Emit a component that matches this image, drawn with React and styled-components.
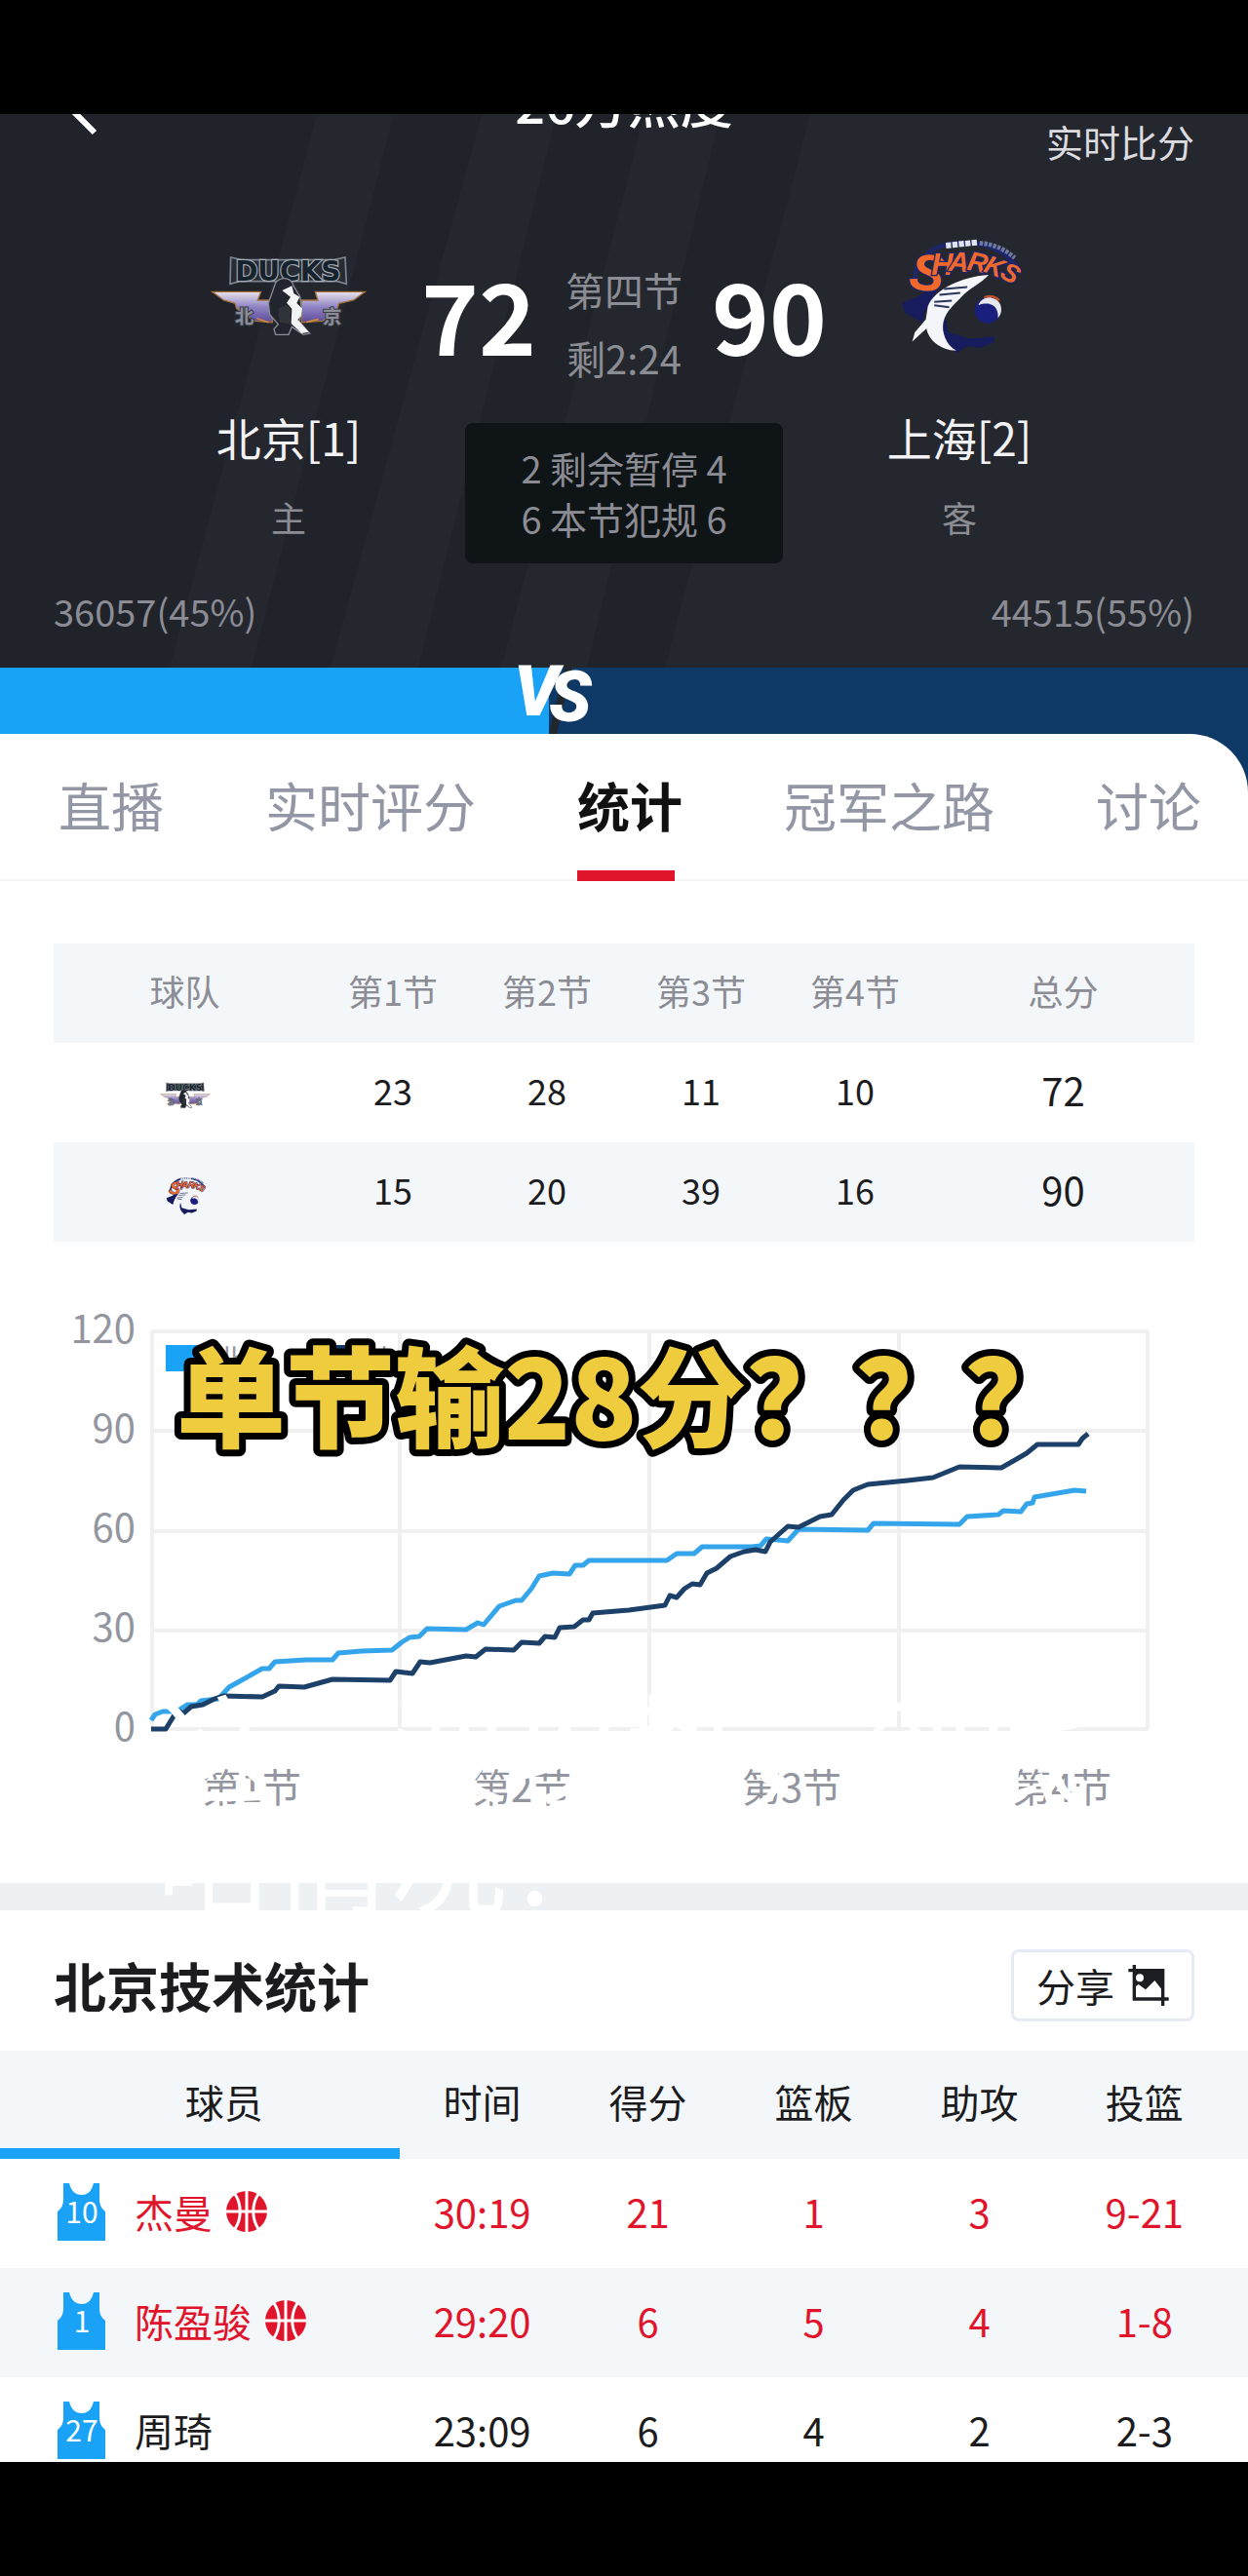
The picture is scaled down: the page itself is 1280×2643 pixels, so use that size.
import React from "react";
import styled, { createGlobalStyle } from "styled-components";

const colors = {
    night: "#20232a",
    nightSoft: "#24272e",
    box: "#0f1417",
    home: "#1aa2f7",
    away: "#0e3865",
    red: "#e0142a",
    ink: "#1c1c1e",
    muted: "#8b8c94",
    tab: "#9296a5",
    stripe: "#f3f7fa",
    band: "#edf1f4",
};

const tabs = ["直播", "实时评分", "统计", "冠军之路", "讨论"];

const periods = ["第1节", "第2节", "第3节", "第4节"];

const players = [
    {
        number: 10,
        name: "杰曼",
        onCourt: true,
        stats: ["30:19", "21", "1", "3", "9-21"],
    },
    {
        number: 1,
        name: "陈盈骏",
        onCourt: true,
        stats: ["29:20", "6", "5", "4", "1-8"],
    },
    {
        number: 27,
        name: "周琦",
        onCourt: false,
        stats: ["23:09", "6", "4", "2", "2-3"],
    },
];

const homeLine =
    "155,465 159,459 167,456 181,456 192,449 202,449 206,445 224,443 235,431 269,412 276,412 282,405 314,403 341,403 347,396 371,394 402,393 412,385 420,380 430,379 438,371 478,372 490,365 496,367 512,348 529,342 535,342 545,330 553,317 567,314 584,315 590,306 598,306 604,301 684,301 694,294 712,294 720,287 771,287 780,286 786,279 798,280 808,281 819,269 890,270 896,263 984,264 992,256 1024,254 1029,250 1047,251 1053,243 1059,242 1061,236 1102,229 1114,230";

const awayLine =
    "155,474 170,474 178,461 184,456 188,458 196,451 208,449 220,443 229,440 269,441 282,435 286,430 312,431 341,423 400,424 406,415 423,417 431,405 441,406 478,399 488,400 498,392 527,393 535,385 553,386 559,379 569,380 574,370 589,369 598,362 604,362 608,355 645,352 682,347 687,337 694,339 702,330 710,325 718,326 725,314 735,309 749,297 763,292 775,290 785,292 790,282 808,266 819,267 841,256 853,254 865,239 875,229 890,223 931,219 957,216 984,205 1027,206 1041,198 1053,191 1064,182 1106,182 1110,176 1116,171";

const GlobalStyle = createGlobalStyle`
    body {
        margin: 0;
        background: #000;
        font-family: "Noto Sans CJK SC", "Noto Sans", sans-serif;
    }

    button {
        font-family: inherit;
        padding: 0;
        border: 0;
        background: none;
        cursor: pointer;
    }
`;

const Frame = styled.div`
    box-sizing: border-box;
    height: 100vh;
    padding: 117px 0;
    background: #000;
`;

const Screen = styled.div`
    height: 100%;
    overflow: hidden;
    background: ${colors.away};
`;

const Header = styled.header`
    position: relative;
    overflow: hidden;
    background: ${colors.nightSoft};
    color: ${colors.muted};
`;

const Stripes = styled.svg`
    position: absolute;
    inset: 0;
    width: 100%;
    height: 100%;
`;

const HeaderContent = styled.div`
    position: relative;
`;

/* the bar is partly scrolled out of the screen */
const NavBar = styled.div`
    display: grid;
    grid-template-columns: 1fr auto 1fr;
    align-items: center;
    height: 122px;
    margin-top: -74px;
    padding: 0 55px;
`;

const BackButton = styled.button`
    justify-self: start;
    color: #fff;

    & svg {
        display: block;
        width: 48px;
        height: 72px;
    }
`;

const NavTitle = styled.h1`
    margin: 0;
    font-size: 54px;
    line-height: 56px;
    font-weight: 500;
    color: #fff;
`;

const LiveLink = styled.a`
    justify-self: end;
    align-self: end;
    font-size: 38px;
    line-height: 40px;
    color: #dcdce0;
    text-decoration: none;
`;

const Scoreboard = styled.div`
    display: grid;
    grid-template-columns: 1fr 426px 1fr;
    padding: 73px 165px 0;
`;

const Team = styled.div`
    display: flex;
    flex-direction: column;
    align-items: center;
`;

const LogoBox = styled.div`
    display: flex;
    align-items: center;
    height: 130px;
`;

const TeamName = styled.div`
    margin-top: 52px;
    font-size: 46px;
    line-height: 56px;
    color: #f2f2f4;
`;

const TeamRole = styled.div`
    margin-top: 30px;
    font-size: 36px;
    line-height: 48px;
`;

const Middle = styled.div`
    display: flex;
    flex-direction: column;
    align-items: center;
    padding-top: 24px;
`;

const ScoreRow = styled.div`
    display: flex;
    gap: 30px;
`;

const Score = styled.div`
    font-size: 100px;
    line-height: 120px;
    font-weight: 700;
    color: #fff;
`;

const Clock = styled.div`
    font-size: 40px;
    line-height: 70px;
    text-align: center;
`;

const FoulBox = styled.div`
    width: 326px;
    margin-top: 32px;
    padding: 20px 0;
    border-radius: 8px;
    background: ${colors.box};
    font-size: 38px;
    line-height: 52px;
    text-align: center;
`;

const Votes = styled.div`
    display: flex;
    justify-content: space-between;
    padding: 25px 55px 34px;
    font-size: 38px;
    line-height: 48px;
`;

const VoteBar = styled.div`
    display: flex;
    position: relative;
    height: 68px;
    background: ${colors.away};
`;

const HomeShare = styled.div`
    background: ${colors.home};
`;

const VersusLogo = styled.svg`
    position: absolute;
    left: 44%;
    top: -16px;
    width: 96px;
    height: 84px;
    margin-left: -36px;
`;

const Panel = styled.main`
    border-radius: 0 60px 0 0;
    background: #fff;
    color: ${colors.ink};
`;

const TabBar = styled.nav`
    display: flex;
    justify-content: space-between;
    height: 149px;
    padding: 0 48px 0 60px;
    border-bottom: 2px solid #f3f4f5;
`;

const Tab = styled.button`
    position: relative;
    padding-bottom: 4px;
    font-size: 54px;
    line-height: 60px;
    font-weight: ${(props) => (props.$active ? 700 : 400)};
    color: ${(props) => (props.$active ? "#111" : colors.tab)};

    &::after {
        content: "";
        display: ${(props) => (props.$active ? "block" : "none")};
        position: absolute;
        left: 0;
        bottom: -2px;
        width: 100px;
        height: 11px;
        background: ${colors.red};
    }
`;

const PeriodSection = styled.section`
    padding: 64px 55px 0;
`;

const PeriodTable = styled.table`
    width: 100%;
    table-layout: fixed;
    border-collapse: collapse;
    font-size: 36px;
    text-align: center;

    & tr {
        height: 102px;
    }

    & thead tr,
    & tbody tr:nth-child(even) {
        background: ${colors.stripe};
    }

    & th {
        font-weight: 400;
        color: ${colors.muted};
    }

    & th,
    & td {
        padding: 0 0 6px;
    }

    & td:last-child {
        font-size: 40px;
    }

    & svg {
        vertical-align: middle;
    }
`;

const ChartSection = styled.section`
    position: relative;
    margin-top: 26px;
    padding-bottom: 72px;
`;

const Chart = styled.svg`
    display: block;
    width: 100%;
    height: auto;
    font-size: 40px;
    fill: #94969f;
`;

const Headline = styled.text`
    font-size: 112px;
    font-weight: 900;
    fill: #efcb3e;
    stroke: #000;
    stroke-width: 14px;
    stroke-linejoin: round;
    paint-order: stroke fill;
`;

const Caption = styled.div`
    position: absolute;
    z-index: 1;
    left: 160px;
    top: 432px;
    font-size: 120px;
    line-height: 114px;
    white-space: nowrap;
    color: #fff;
`;

const Band = styled.div`
    height: 28px;
    background: ${colors.band};
`;

const SectionHead = styled.div`
    display: flex;
    align-items: center;
    justify-content: space-between;
    height: 134px;
    padding: 10px 55px 0;
`;

const SectionTitle = styled.h2`
    margin: 0;
    font-size: 54px;
    line-height: 60px;
    font-weight: 700;
`;

const ShareButton = styled.button`
    display: flex;
    align-items: center;
    justify-content: center;
    gap: 14px;
    box-sizing: border-box;
    width: 188px;
    height: 74px;
    border: 3px solid #e6eaf5;
    border-radius: 8px;
    font-size: 40px;
    color: ${colors.ink};
`;

const StatsTable = styled.table`
    width: 100%;
    table-layout: fixed;
    border-collapse: collapse;
    font-size: 40px;
    line-height: 48px;
    text-align: center;

    & th {
        padding: 0 0 8px;
        font-weight: 400;
    }

    & td {
        padding: 0 0 4px;
    }

    & th:first-child {
        padding-left: 50px;
        box-shadow: inset 0 -11px ${colors.home};
    }

    & th:last-child,
    & td:last-child {
        padding-right: 22px;
    }
`;

const HeadRow = styled.tr`
    height: 111px;
    background: ${colors.stripe};
`;

const PlayerRow = styled.tr`
    height: 112px;
    color: ${(props) => (props.$onCourt ? colors.red : colors.ink)};

    &:nth-child(even) {
        background: ${colors.stripe};
    }
`;

const PlayerCell = styled.div`
    display: flex;
    align-items: center;
    padding-left: 59px;
`;

const Jersey = styled.svg`
    width: 49px;
    height: 59px;
    margin-right: 30px;
    font-size: 30px;
`;

const Ball = styled.svg`
    width: 42px;
    height: 42px;
    margin-left: 14px;
`;

const DucksLogo = ({ width }) => (
    <svg width={width} viewBox="50 95 480 255" role="img" aria-label="北京">
        <defs>
            <linearGradient id="wing" x1="0" y1="0" x2="0" y2="1">
                <stop offset="0" stopColor="#e9e2ea" />
                <stop offset="0.5" stopColor="#8f83c4" />
                <stop offset="1" stopColor="#5d4a9a" />
            </linearGradient>
        </defs>
        <path
            d="M55 210H205L195 236H240V304L185 300 130 262 125 246 90 236Z"
            fill="url(#wing)"
            stroke="#a3703c"
            strokeWidth="4"
        />
        <path
            d="M525 210H372L380 236H330V304L395 300 440 262 445 246 490 236Z"
            fill="url(#wing)"
            stroke="#a3703c"
            strokeWidth="4"
        />
        <path
            d="M112 104L145 112H430L464 104 468 186 440 178H140L110 186Z"
            fill="#272b33"
            stroke="#7d858f"
            strokeWidth="5"
        />
        <text
            x="288"
            y="176"
            textAnchor="middle"
            fontFamily="DejaVu Sans"
            fontSize="84"
            fontWeight="700"
            fill="#16232e"
            stroke="#a3abb4"
            strokeWidth="7"
            paintOrder="stroke"
        >
            DUCKS
        </text>
        <g
            fontSize="58"
            fontWeight="700"
            textAnchor="middle"
            fill="#8a8d98"
            stroke="#3a3d48"
            strokeWidth="6"
            paintOrder="stroke"
        >
            <text x="154" y="308">
                北
            </text>
            <text x="424" y="308">
                京
            </text>
        </g>
        <path
            d="M250 182C270 160 300 168 305 192L325 225 332 275 322 300 355 338 335 342 300 318 290 342H250L245 325 258 310 232 280 228 245Z"
            fill="#22252d"
            stroke="#888d96"
            strokeWidth="4"
        />
        <path
            d="M270 206L300 192 306 215 324 226 315 245 332 262 328 285 318 296 352 334 330 338 298 308 300 262 284 244 296 226Z"
            fill="#f1f3f4"
        />
        <path d="M258 262L285 250 296 264 296 310 262 304Z" fill="#30333a" />
        <path d="M192 292L228 304M345 304L382 294" stroke="#cf8a3c" strokeWidth="5" />
    </svg>
);

const sharkLetters = [
    { char: "S", x: 132, y: 200, turn: 8, size: 160 },
    { char: "H", x: 184, y: 152, turn: 0, size: 92 },
    { char: "A", x: 234, y: 142, turn: 4, size: 86 },
    { char: "R", x: 288, y: 142, turn: 12, size: 84 },
    { char: "K", x: 336, y: 152, turn: 22, size: 80 },
    { char: "S", x: 382, y: 170, turn: 30, size: 80 },
];

const SharksLogo = ({ width }) => (
    <svg width={width} viewBox="45 35 385 360" role="img" aria-label="上海">
        <path
            d="M100 190C90 110 150 58 230 54C310 48 380 74 420 134"
            fill="none"
            stroke="#1c2668"
            strokeWidth="14"
        />
        <path
            d="M60 240L118 215 150 190 170 200 130 268 122 300 70 268Z"
            fill="#171c5e"
        />
        <path
            d="M185 250L205 330 270 350 345 342 345 360 300 378 262 372 230 392 180 360Z"
            fill="#171c5e"
        />
        <circle cx="325" cy="262" r="40" fill="#1a1e7c" />
        <path
            d="M296 246C308 214 352 216 364 244C370 262 366 276 356 286C360 258 342 230 296 246Z"
            fill="#e8e6ee"
        />
        <path
            d="M314 222C330 214 350 218 360 232"
            fill="none"
            stroke="#c7502c"
            strokeWidth="7"
        />
        <path
            d="M328 152C250 156 160 196 140 250L134 290 100 330 92 358 136 318C142 354 180 386 228 386C196 368 182 330 188 298C196 262 226 240 248 216C270 192 302 180 328 152Z"
            fill="#f4f5f8"
        />
        <path
            d="M190 196L262 190M176 214L240 208M160 236L214 232M160 246L206 252"
            stroke="#2a3358"
            strokeWidth="6"
        />
        <path
            d="M196 62L292 52"
            stroke="#dfe3ee"
            strokeWidth="18"
            strokeDasharray="16 4"
        />
        <path
            d="M300 54C345 58 380 74 408 100"
            stroke="#6f79a8"
            strokeWidth="14"
            strokeDasharray="10 4"
            fill="none"
        />
        <g
            fontFamily="Liberation Sans"
            fontStyle="italic"
            fontWeight="700"
            textAnchor="middle"
            fill="#f0692b"
            stroke="#1c2668"
            strokeWidth="8"
            paintOrder="stroke"
        >
            {sharkLetters.map((letter) => (
                <text
                    key={letter.x}
                    fontSize={letter.size}
                    transform={`translate(${letter.x} ${letter.y}) rotate(${letter.turn})`}
                >
                    {letter.char}
                </text>
            ))}
        </g>
    </svg>
);

const ShareIcon = () => (
    <svg width="42" height="42" viewBox="384 80 124 126" aria-hidden="true">
        <path d="M402 97H490V160L465 128 437 156 415 140 402 150Z" fill="#1d1e22" />
        <circle cx="419" cy="120" r="12" fill="#fff" />
        <path
            d="M402 80V185H508M384 97H490V206"
            fill="none"
            stroke="#1d1e22"
            strokeWidth="10"
        />
    </svg>
);

const BallIcon = () => (
    <Ball viewBox="0 0 42 42" role="img" aria-label="在场">
        <circle cx="21" cy="21" r="21" fill={colors.red} />
        <path
            d="M21 0V42M0 21H42M9 3C16 14 16 28 9 39M33 3C26 14 26 28 33 39"
            fill="none"
            stroke="#fff"
            strokeWidth="3"
        />
    </Ball>
);

const JerseyIcon = ({ number }) => (
    <Jersey viewBox="0 0 49 59">
        <path
            d="M6 0H12C14 8 18 12 25 12C31 12 35 8 37 0H43V16C43 22 45 26 49 29V59H0V29C4 26 6 22 6 16Z"
            fill={colors.home}
        />
        <text x="25" y="41" textAnchor="middle" fill="#fff">
            {number}
        </text>
    </Jersey>
);

const MatchHeader = () => (
    <Header>
        <Stripes viewBox="0 0 1280 568" preserveAspectRatio="none" aria-hidden="true">
            <path
                d="M0 0H325L174 568H0ZM404 0H494L339 568H258ZM571 0H661L514 568H429ZM739 0H831L682 568H602Z"
                fill={colors.night}
            />
        </Stripes>
        <HeaderContent>
            <NavBar>
                <BackButton aria-label="返回">
                    <svg viewBox="0 0 48 72" fill="none" stroke="currentColor">
                        <path d="M42 0L8 34 42 68" strokeWidth="6" />
                    </svg>
                </BackButton>
                <NavTitle>26万热度</NavTitle>
                <LiveLink href="#live">实时比分</LiveLink>
            </NavBar>
            <Scoreboard>
                <Team>
                    <LogoBox>
                        <DucksLogo width={160} />
                    </LogoBox>
                    <TeamName>北京[1]</TeamName>
                    <TeamRole>主</TeamRole>
                </Team>
                <Middle>
                    <ScoreRow>
                        <Score>72</Score>
                        <Clock>
                            第四节
                            <br />
                            剩2:24
                        </Clock>
                        <Score>90</Score>
                    </ScoreRow>
                    <FoulBox>
                        2 剩余暂停 4
                        <br />6 本节犯规 6
                    </FoulBox>
                </Middle>
                <Team>
                    <LogoBox>
                        <SharksLogo width={128} />
                    </LogoBox>
                    <TeamName>上海[2]</TeamName>
                    <TeamRole>客</TeamRole>
                </Team>
            </Scoreboard>
            <Votes>
                <span>36057(45%)</span>
                <span>44515(55%)</span>
            </Votes>
        </HeaderContent>
    </Header>
);

const ScoreChart = () => (
    <Chart viewBox="0 0 1280 560">
        <path
            d="M155 66H1178M155 168H1178M155 271H1178M155 373H1178M155 474H1178M156 66V474M410 66V474M666 66V474M922 66V474M1177 66V474"
            fill="none"
            stroke="#f0f0f1"
            strokeWidth="4"
        />
        {[120, 90, 60, 30, 0].map((value, i) => (
            <text key={value} x="139" y={78 + i * 102} textAnchor="end">
                {value}
            </text>
        ))}
        {periods.map((period, i) => (
            <text key={period} x={258 + i * 277} y="549" textAnchor="middle">
                {period}
            </text>
        ))}
        <g fontSize="30">
            <rect x="170" y="80" width="44" height="27" fill={colors.home} />
            <text x="222" y="106">
                北京
            </text>
            <rect x="320" y="80" width="44" height="27" fill={colors.away} />
            <text x="380" y="106">
                上海
            </text>
        </g>
        <g fill="none" strokeWidth="5" strokeLinejoin="round">
            <polyline points={homeLine} stroke="#34a5ea" />
            <polyline points={awayLine} stroke="#1d4068" />
        </g>
        <Headline x="181" y="177">
            单节输28分？？？
        </Headline>
    </Chart>
);

const App = () => (
    <Frame>
        <GlobalStyle />
        <Screen>
            <MatchHeader />
            <VoteBar>
                <HomeShare style={{ width: "44%" }} />
                <VersusLogo viewBox="0 0 96 84" role="img" aria-label="VS">
                    <path d="M52 16L36 84H44L60 16Z" fill="#22262d" />
                    <text
                        x="0 36"
                        y="65 71"
                        fontFamily="Roboto"
                        fontSize="72"
                        fontWeight="900"
                        fontStyle="italic"
                        fill="#fff"
                    >
                        VS
                    </text>
                </VersusLogo>
            </VoteBar>
            <Panel>
                <TabBar>
                    {tabs.map((tab) => (
                        <Tab key={tab} $active={tab === "统计"}>
                            {tab}
                        </Tab>
                    ))}
                </TabBar>
                <PeriodSection>
                    <PeriodTable>
                        <colgroup>
                            <col style={{ width: "23%" }} />
                            <col span="4" />
                            <col style={{ width: "23%" }} />
                        </colgroup>
                        <thead>
                            <tr>
                                <th>球队</th>
                                {periods.map((period) => (
                                    <th key={period}>{period}</th>
                                ))}
                                <th>总分</th>
                            </tr>
                        </thead>
                        <tbody>
                            <tr>
                                <td>
                                    <DucksLogo width={52} />
                                </td>
                                <td>23</td>
                                <td>28</td>
                                <td>11</td>
                                <td>10</td>
                                <td>72</td>
                            </tr>
                            <tr>
                                <td>
                                    <SharksLogo width={42} />
                                </td>
                                <td>15</td>
                                <td>20</td>
                                <td>39</td>
                                <td>16</td>
                                <td>90</td>
                            </tr>
                        </tbody>
                    </PeriodTable>
                </PeriodSection>
                <ChartSection>
                    <ScoreChart />
                    <Caption>
                        这一波攻势，到底
                        <br />
                        啥情况？
                    </Caption>
                </ChartSection>
                <Band />
                <SectionHead>
                    <SectionTitle>北京技术统计</SectionTitle>
                    <ShareButton>
                        分享
                        <ShareIcon />
                    </ShareButton>
                </SectionHead>
                <StatsTable>
                    <colgroup>
                        <col style={{ width: "32%" }} />
                        <col span="4" style={{ width: "170px" }} />
                        <col />
                    </colgroup>
                    <thead>
                        <HeadRow>
                            <th>球员</th>
                            <th>时间</th>
                            <th>得分</th>
                            <th>篮板</th>
                            <th>助攻</th>
                            <th>投篮</th>
                        </HeadRow>
                    </thead>
                    <tbody>
                        {players.map((player) => (
                            <PlayerRow key={player.number} $onCourt={player.onCourt}>
                                <td>
                                    <PlayerCell>
                                        <JerseyIcon number={player.number} />
                                        {player.name}
                                        {player.onCourt && <BallIcon />}
                                    </PlayerCell>
                                </td>
                                {player.stats.map((value, i) => (
                                    <td key={i}>{value}</td>
                                ))}
                            </PlayerRow>
                        ))}
                    </tbody>
                </StatsTable>
            </Panel>
        </Screen>
    </Frame>
);

export default App;
